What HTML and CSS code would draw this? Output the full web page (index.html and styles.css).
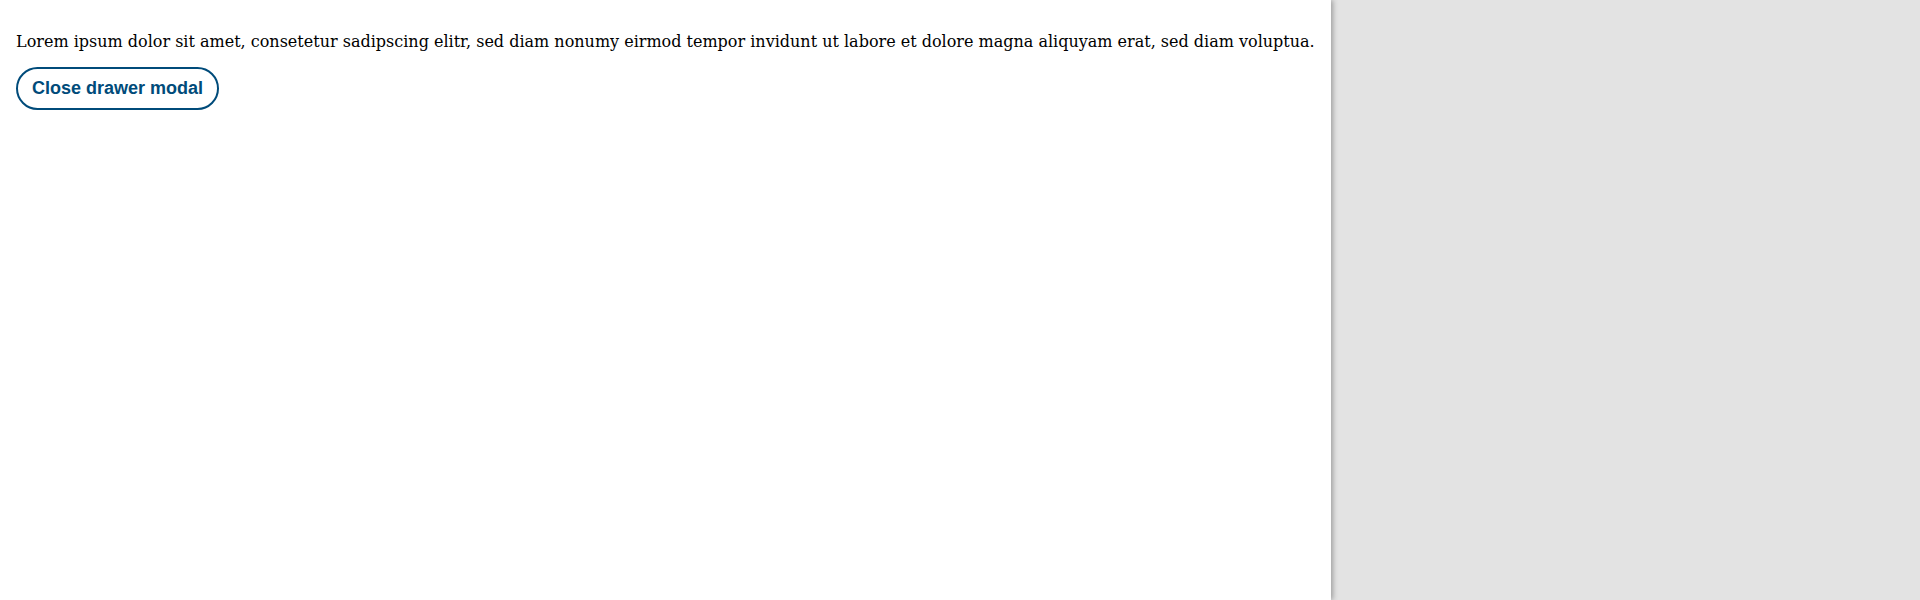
FILE: index.html
```html
<!DOCTYPE html>
<html lang="en">
<head>
<meta charset="utf-8">
<title>Drawer</title>
<link rel="stylesheet" href="styles.css">
</head>
<body>
<div class="layout">
  <aside class="drawer">
    <p class="drawer-text">Lorem ipsum dolor sit amet, consetetur sadipscing elitr, sed diam nonumy eirmod tempor invidunt ut labore et dolore magna aliquyam erat, sed diam voluptua.</p>
    <button class="close-btn" type="button">Close drawer modal</button>
  </aside>
  <div class="backdrop"></div>
</div>
</body>
</html>
```
FILE: styles.css
```css
html, body {
  margin: 0;
  height: 100%;
}
body {
  background: #e3e3e3;
}
.layout {
  display: flex;
  height: 100%;
}
.drawer {
  width: 1331px;
  flex: none;
  background: #ffffff;
  padding: 16px;
  box-sizing: border-box;
  box-shadow: 2px 0 5px rgba(0, 0, 0, 0.3);
  position: relative;
  z-index: 1;
}
.backdrop {
  flex: 1;
  background: #e3e3e3;
}
.drawer-text {
  margin: 16px 0 16px;
  font-family: "DejaVu Serif", serif;
  font-size: 16px;
  color: #000;
}
.close-btn {
  font-family: "Liberation Sans", Arial, sans-serif;
  font-weight: bold;
  font-size: 18px;
  color: #004b7a;
  background: #fff;
  border: 2px solid #004b7a;
  border-radius: 999px;
  padding: 9px 14px;
  cursor: pointer;
}
```
